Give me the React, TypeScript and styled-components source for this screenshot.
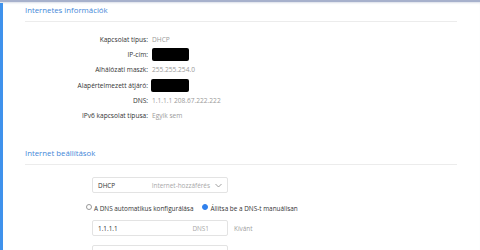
import React from "react";
import styled, { createGlobalStyle } from "styled-components";

const Global = createGlobalStyle`
  html, body { margin: 0; padding: 0; background: #fff; }
  body { font-family: "Open Sans", "Liberation Sans", sans-serif; }
`;

const Frame = styled.div`
  width: 480px;
  height: 250px;
  box-sizing: border-box;
  border-top: 2px solid #a7b1cc;
  box-shadow: inset 0 2px 2px -1px rgba(150,160,190,0.35);
  overflow: hidden;
  display: flex;
`;

const Stripe = styled.div`
  width: 3px;
  background: #3f92ec;
  margin-top: 1px;
  flex: none;
`;

const Content = styled.div`
  flex: 1;
  padding-left: 22px;
  padding-top: 3px;
`;

const Title = styled.div`
  font-size: 7.8px;
  color: #4386d8;
  height: 11px;
  line-height: 11px;
`;

const Divider = styled.div`
  width: 432px;
  height: 1px;
  background: #ececec;
  margin-top: 5px;
`;

const InfoGrid = styled.div`
  display: grid;
  grid-template-columns: 123px auto;
  column-gap: 4px;
  margin-top: 10px;
`;

const Label = styled.div`
  font-size: 6.6px;
  color: #333;
  text-align: right;
  height: 15.2px;
  line-height: 15.2px;
  white-space: nowrap;
`;

const Value = styled.div`
  font-size: 6.6px;
  color: #9a9a9a;
  height: 15.2px;
  line-height: 15.2px;
  display: flex;
  align-items: center;
  white-space: nowrap;
`;

const Redacted = styled.div<{ $w: number; $dx?: number }>`
  width: ${(p) => p.$w}px;
  height: 13px;
  background: #000;
  border-radius: 2px;
  filter: blur(0.7px);
  margin-left: ${(p) => p.$dx ?? 0}px;
`;

const Section2 = styled.div`
  margin-top: 25px;
`;

const Form = styled.div`
  margin-left: 67px;
  margin-top: 12px;
  display: flex;
  flex-direction: column;
`;

const Box = styled.div`
  width: 136px;
  height: 16px;
  box-sizing: border-box;
  border: 1px solid #e3e3e3;
  border-radius: 2px;
  display: flex;
  align-items: center;
  padding: 0 5px;
  font-size: 6.4px;
  color: #333;
`;

const Spacer = styled.div`
  flex: 1;
`;

const Hint = styled.span<{ $pr?: number }>`
  color: #a8a8a8;
  margin-right: ${(p) => p.$pr ?? 0}px;
`;

const Chevron = styled.svg`
  margin-left: 5px;
  flex: none;
`;

const RadioRow = styled.div`
  display: flex;
  align-items: center;
  height: 14px;
  margin-top: 8px;
  margin-left: -6px;
  font-size: 6.4px;
  color: #333;
`;

const Radio = styled.span<{ $on?: boolean }>`
  width: 6px;
  height: 6px;
  border-radius: 50%;
  box-sizing: border-box;
  border: 1px solid ${(p) => (p.$on ? "#2f80ed" : "#999")};
  background: ${(p) => (p.$on ? "#2f80ed" : "#fff")};
  margin-right: 2px;
  margin-bottom: 2px;
  flex: none;
`;

const RadioText = styled.span<{ $gap?: number }>`
  margin-right: ${(p) => p.$gap ?? 0}px;
  white-space: nowrap;
`;

const InputRow = styled.div`
  display: flex;
  align-items: center;
  margin-top: 5px;
`;

const Side = styled.span`
  font-size: 6.4px;
  color: #a0a0a0;
  margin-left: 6px;
`;

const NextRow = styled.div`
  margin-top: 9px;
`;

export default function App() {
  return (
    <>
      <Global />
      <Frame>
        <Stripe />
        <Content>
          <Title>Internetes információk</Title>
          <Divider />
          <InfoGrid>
            <Label>Kapcsolat típus:</Label>
            <Value>DHCP</Value>
            <Label>IP-cím:</Label>
            <Value>
              <Redacted $w={37} />
            </Value>
            <Label>Alhálózati maszk:</Label>
            <Value>255.255.254.0</Value>
            <Label>Alapértelmezett átjáró:</Label>
            <Value>
              <Redacted $w={38} $dx={-1} />
            </Value>
            <Label>DNS:</Label>
            <Value>1.1.1.1 208.67.222.222</Value>
            <Label>IPv6 kapcsolat típusa:</Label>
            <Value>Egyik sem</Value>
          </InfoGrid>
          <Section2>
            <Title>Internet beállítások</Title>
            <Divider />
          </Section2>
          <Form>
            <Box>
              DHCP
              <Spacer />
              <Hint>Internet-hozzáférés</Hint>
              <Chevron width="7" height="5" viewBox="0 0 7 5">
                <path d="M0.5 1 L3.5 4 L6.5 1" fill="none" stroke="#888" strokeWidth="0.8" />
              </Chevron>
            </Box>
            <RadioRow>
              <Radio />
              <RadioText $gap={9}>A DNS automatikus konfigurálása</RadioText>
              <Radio $on />
              <RadioText>Állítsa be a DNS-t manuálisan</RadioText>
            </RadioRow>
            <InputRow>
              <Box>
                1.1.1.1
                <Spacer />
                <Hint $pr={13}>DNS1</Hint>
              </Box>
              <Side>Kívánt</Side>
            </InputRow>
            <NextRow>
              <Box />
            </NextRow>
          </Form>
        </Content>
      </Frame>
    </>
  );
}
